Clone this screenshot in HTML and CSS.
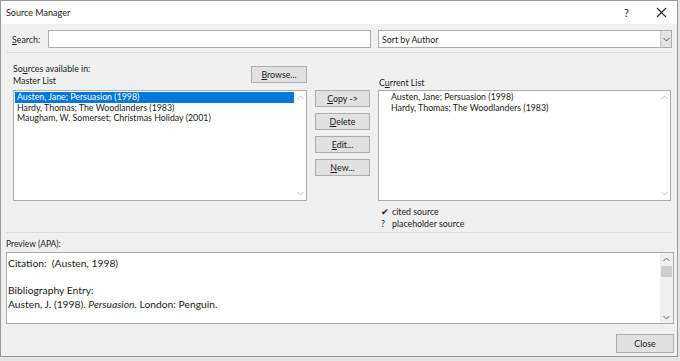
FILE: index.html
```html
<!DOCTYPE html>
<html>
<head>
<meta charset="UTF-8" />
<title>Source Manager</title>
<link rel="stylesheet" href="styles.css">
</head>
<body>

<div class="dialog">
    <div class="titlebar">
        <span class="title">Source Manager</span>
        <span class="tb-help">?</span>
        <span class="tb-close">
            <svg width="11" height="11" viewBox="0 0 11 11"><path d="M1 1L10 10M10 1L1 10" stroke="#222" stroke-width="1.1" fill="none"/></svg>
        </span>
    </div>

    <div class="content">
        <div class="search-row">
            <label class="lbl"><u>S</u>earch:</label>
            <div class="field search"></div>
            <div class="field sort">
                <span>Sort by Author</span>
                <span class="drop">
                    <svg width="7" height="5" viewBox="0 0 7 5"><path d="M0.5 1L3.5 4L6.5 1" stroke="#555" fill="none"/></svg>
                </span>
            </div>
        </div>

        <div class="sep"></div>

        <div class="lists">
            <div class="head-left">
                <div class="labels">
                    <div>So<u>u</u>rces available in:</div>
                    <div>Master List</div>
                </div>
                <div class="btn browse"><u>B</u>rowse...</div>
            </div>
            <div></div>
            <div class="head-right">C<u>u</u>rrent List</div>

            <div class="listbox">
                <div class="rows">
                    <div class="row selected">Austen, Jane; Persuasion (1998)</div>
                    <div class="row">Hardy, Thomas; The Woodlanders (1983)</div>
                    <div class="row">Maugham, W. Somerset; Christmas Holiday (2001)</div>
                </div>
                <div class="vscroll">
                    <svg width="7" height="5" viewBox="0 0 7 5"><path d="M0.5 4L3.5 1L6.5 4" stroke="#c4c4c4" fill="none"/></svg>
                    <svg width="7" height="5" viewBox="0 0 7 5"><path d="M0.5 1L3.5 4L6.5 1" stroke="#c4c4c4" fill="none"/></svg>
                </div>
            </div>

            <div class="actions">
                <div class="btn"><u>C</u>opy -&gt;</div>
                <div class="btn"><u>D</u>elete</div>
                <div class="btn"><u>E</u>dit...</div>
                <div class="btn"><u>N</u>ew...</div>
            </div>

            <div class="listbox">
                <div class="rows current">
                    <div class="row">Austen, Jane; Persuasion (1998)</div>
                    <div class="row">Hardy, Thomas; The Woodlanders (1983)</div>
                </div>
                <div class="vscroll">
                    <svg width="7" height="5" viewBox="0 0 7 5"><path d="M0.5 4L3.5 1L6.5 4" stroke="#c4c4c4" fill="none"/></svg>
                    <svg width="7" height="5" viewBox="0 0 7 5"><path d="M0.5 1L3.5 4L6.5 1" stroke="#c4c4c4" fill="none"/></svg>
                </div>
            </div>

            <div></div>
            <div></div>
            <div class="legend">
                <div><span class="mark">&#10004;</span>cited source</div>
                <div><span class="mark">?</span>placeholder source</div>
            </div>
        </div>

        <div class="sep"></div>

        <div class="preview-label">Preview (APA):</div>
        <div class="preview">
            <div class="preview-text">
                <p>Citation:&nbsp; (Austen, 1998)</p>
                <p>&nbsp;</p>
                <p>Bibliography Entry:</p>
                <p>Austen, J. (1998). <i>Persuasion.</i> London: Penguin.</p>
            </div>
            <div class="vscroll dark">
                <svg width="7" height="5" viewBox="0 0 7 5"><path d="M0.5 4L3.5 1L6.5 4" stroke="#666" fill="none"/></svg>
                <div class="thumb"></div>
                <div class="spacer"></div>
                <svg width="7" height="5" viewBox="0 0 7 5"><path d="M0.5 1L3.5 4L6.5 1" stroke="#666" fill="none"/></svg>
            </div>
        </div>

        <div class="footer">
            <div class="btn close">Close</div>
        </div>
    </div>
</div>

</body>
</html>
```

FILE: styles.css
```css
* {
margin: 0;
padding: 0;
box-sizing: border-box;
}

html, body {
height: 100%;
background-color: #e4e4e4;
font-family: Lato, "Open Sans", sans-serif;
font-size: 8.8px;
color: #1a1a1a;
}

.dialog {
width: 678px;
height: 357px;
background-color: #f0f0f0;
border: 1px solid #9a9a9a;
display: flex;
flex-direction: column;
}

.titlebar {
height: 23px;
background-color: #fff;
display: flex;
align-items: center;
padding-left: 5px;
font-size: 9px;
}

.title {
flex: 1;
}

.tb-help {
width: 20px;
font-size: 11px;
margin-right: 12px;
}

.tb-close {
width: 21px;
display: flex;
}

.content {
flex: 1;
display: flex;
flex-direction: column;
padding: 6px 3px 0 5px;
}

.search-row {
display: flex;
align-items: center;
height: 18px;
padding-left: 6px;
}

.lbl {
width: 36px;
}

.field {
height: 18px;
background-color: #fff;
border: 1px solid #adadad;
}

.search {
width: 323px;
}

.sort {
width: 294px;
margin-left: 7px;
display: flex;
align-items: center;
padding-left: 3px;
}

.sort span:first-child {
flex: 1;
}

.drop {
width: 11px;
height: 16px;
background-color: #e3e3e3;
border-left: 1px solid #c6c6c6;
display: flex;
align-items: center;
justify-content: center;
}

.sep {
height: 1px;
background-color: #dddddd;
margin-top: 4px;
margin-right: 2px;
}

.lists {
display: grid;
grid-template-columns: 294px 55px 293px;
grid-template-rows: 28px 111px 27px;
column-gap: 8px;
padding-left: 7px;
margin-top: 9px;
}

.head-left {
display: flex;
justify-content: space-between;
}

.labels {
line-height: 12px;
padding-top: 1px;
}

.browse {
width: 56px;
height: 16px;
margin-top: 4px;
}

.head-right {
align-self: end;
padding-bottom: 2px;
margin-left: 1px;
}

.listbox {
background-color: #fff;
border: 1px solid #adadad;
display: flex;
}

.lists > .listbox:last-of-type {
margin-left: 1px;
}

.rows {
flex: 1;
padding: 1px 0 0 1px;
}

.row {
height: 10.5px;
line-height: 10.5px;
padding-left: 2px;
}

.current .row {
padding-left: 11px;
}

.selected {
background-color: #0078d7;
color: #fff;
}

.vscroll {
width: 12px;
display: flex;
flex-direction: column;
justify-content: space-between;
align-items: center;
padding: 4px 0;
}

.actions {
display: flex;
flex-direction: column;
gap: 6px;
}

.btn {
height: 17px;
background-color: #e1e1e1;
border: 1px solid #adadad;
display: flex;
align-items: center;
justify-content: center;
}

.legend {
padding-top: 5px;
padding-left: 1px;
line-height: 12px;
}

.mark {
display: inline-block;
width: 13px;
padding-left: 2px;
}

.preview-label {
font-size: 8.5px;
margin-top: 6px;
height: 13px;
}

.preview {
height: 72px;
background-color: #fff;
border: 1px solid #adadad;
display: flex;
}

.preview-text {
flex: 1;
font-size: 10.3px;
line-height: 13.5px;
padding: 4px 0 0 1px;
}

.vscroll.dark {
width: 13px;
justify-content: flex-start;
padding: 4px 0 3px;
background-color: #f0f0f0;
}

.thumb {
width: 11px;
height: 11px;
margin-top: 4px;
background-color: #cdcdcd;
}

.spacer {
flex: 1;
}

.footer {
display: flex;
justify-content: flex-end;
padding-top: 10px;
}

.close {
width: 58px;
height: 19px;
}
```
